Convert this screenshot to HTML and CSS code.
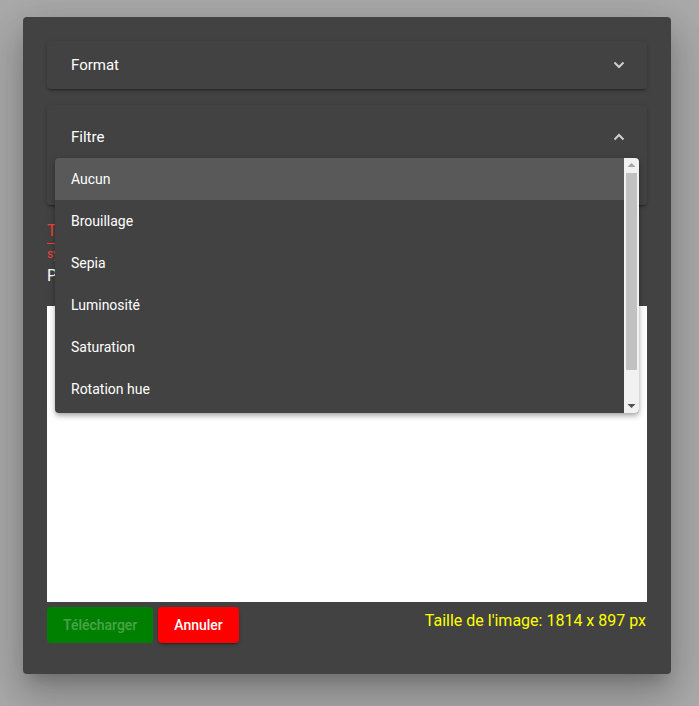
FILE: index.html
```html
<!DOCTYPE html>
<html>
<head>
<meta charset="utf-8">
<link rel="stylesheet" href="styles.css">
</head>
<body>
<div class="dialog">
  <div class="panel collapsed">
    <div class="panel-header">
      <span class="panel-title">Format</span>
      <svg class="chev" width="12" height="8" viewBox="0 0 12 8"><polyline points="1.5,1.5 6,6 10.5,1.5" fill="none" stroke="#d0d0d0" stroke-width="2"/></svg>
    </div>
  </div>
  <div class="panel expanded">
    <div class="panel-header tall">
      <span class="panel-title">Filtre</span>
      <svg class="chev" width="12" height="8" viewBox="0 0 12 8"><polyline points="1.5,6.5 6,2 10.5,6.5" fill="none" stroke="#d0d0d0" stroke-width="2"/></svg>
    </div>
    <div class="panel-body"></div>
  </div>
  <div class="field">
    <div class="field-label">T</div>
    <div class="field-line"></div>
    <div class="field-hint">sy</div>
  </div>
  <div class="preview-title">P</div>
  <div class="preview"></div>
  <div class="actions">
    <div class="buttons">
      <button class="btn btn-dl">Télécharger</button>
      <button class="btn btn-cancel">Annuler</button>
    </div>
    <div class="size">Taille de l'image: 1814 x 897 px</div>
  </div>

  <div class="dropdown">
    <div class="options">
      <div class="option active">Aucun</div>
      <div class="option">Brouillage</div>
      <div class="option">Sepia</div>
      <div class="option">Luminosité</div>
      <div class="option">Saturation</div>
      <div class="option">Rotation hue</div>
    </div>
    <div class="scrollbar">
      <svg class="arrow" width="15" height="15" viewBox="0 0 15 15"><polygon points="3.5,9 7.5,5 11.5,9" fill="#a3a3a3"/></svg>
      <div class="thumb-track"><div class="thumb"></div></div>
      <svg class="arrow" width="15" height="15" viewBox="0 0 15 15"><polygon points="3.5,6 7.5,10 11.5,6" fill="#505050"/></svg>
    </div>
  </div>
</div>
</body>
</html>
```

FILE: styles.css
```css
* { box-sizing: border-box; }
html, body { margin: 0; height: 100%; }
body {
  background: #aaaaaa;
  font-family: Roboto, "Liberation Sans", sans-serif;
  padding: 17px 0 0 23px;
  overflow: hidden;
}
.dialog {
  position: relative;
  width: 648px;
  height: 657px;
  background: #424242;
  border-radius: 4px;
  padding: 24px 24px 0 24px;
  box-shadow: 0 11px 15px -7px rgba(0,0,0,.2), 0 24px 38px 3px rgba(0,0,0,.14), 0 9px 46px 8px rgba(0,0,0,.12);
  display: flex;
  flex-direction: column;
}
.panel {
  background: #424242;
  border-radius: 4px;
  box-shadow: 0 3px 1px -2px rgba(0,0,0,.2), 0 2px 2px 0 rgba(0,0,0,.14), 0 1px 5px 0 rgba(0,0,0,.12);
  color: #fff;
}
.panel.expanded { margin-top: 16px; margin-bottom: 16px; }
.panel-header {
  height: 48px;
  display: flex;
  align-items: center;
  justify-content: space-between;
  padding: 0 22px 0 24px;
}
.panel-header.tall { height: 64px; }
.panel-title { font-size: 15px; }
.chev { display: block; }
.panel-body { height: 36px; }

.field { height: 45px; }
.field-label {
  color: #f44336;
  font-size: 16px;
  line-height: 20px;
}
.field-line {
  width: 200px;
  height: 1px;
  background: #ff3b2f;
  margin-top: 2px;
}
.field-hint {
  color: #f44336;
  font-size: 12px;
  line-height: 14px;
  margin-top: 3px;
}
.preview-title {
  color: #fff;
  font-size: 16px;
  line-height: 20px;
  height: 40px;
}
.preview {
  background: #fff;
  height: 296px;
}
.actions {
  display: flex;
  justify-content: space-between;
  align-items: flex-start;
  margin-top: 5px;
}
.buttons { display: flex; gap: 5px; }
.btn {
  height: 36px;
  border: none;
  border-radius: 4px;
  font-family: Roboto, "Liberation Sans", sans-serif;
  font-size: 14px;
  font-weight: 500;
  padding: 0 16px;
}
.btn-dl { background: #008000; color: rgba(255,255,255,.3); width: 106px; }
.btn-cancel {
  background: #ff0000;
  color: #fff;
  width: 81px;
  box-shadow: 0 3px 1px -2px rgba(0,0,0,.2), 0 2px 2px 0 rgba(0,0,0,.14), 0 1px 5px 0 rgba(0,0,0,.12);
}
.size {
  color: #ffff00;
  font-size: 16px;
  line-height: 20px;
  margin-top: 4px;
  margin-right: 1px;
}

.dropdown {
  position: absolute;
  left: 32px;
  top: 141px;
  width: 584px;
  height: 255px;
  background: #424242;
  border-radius: 4px;
  box-shadow: 0 2px 4px -1px rgba(0,0,0,.2), 0 4px 5px 0 rgba(0,0,0,.14), 0 1px 10px 0 rgba(0,0,0,.12);
  display: flex;
  overflow: hidden;
}
.options { flex: 1; }
.option {
  height: 42px;
  line-height: 42px;
  padding: 0 16px;
  font-size: 14px;
  color: #fff;
}
.option.active { background: #595959; }
.scrollbar {
  width: 15px;
  background: #f1f1f1;
  display: flex;
  flex-direction: column;
}
.arrow { display: block; flex: none; }
.thumb-track { flex: 1; padding: 0 2px; }
.thumb { height: 197px; background: #c1c1c1; }
```
